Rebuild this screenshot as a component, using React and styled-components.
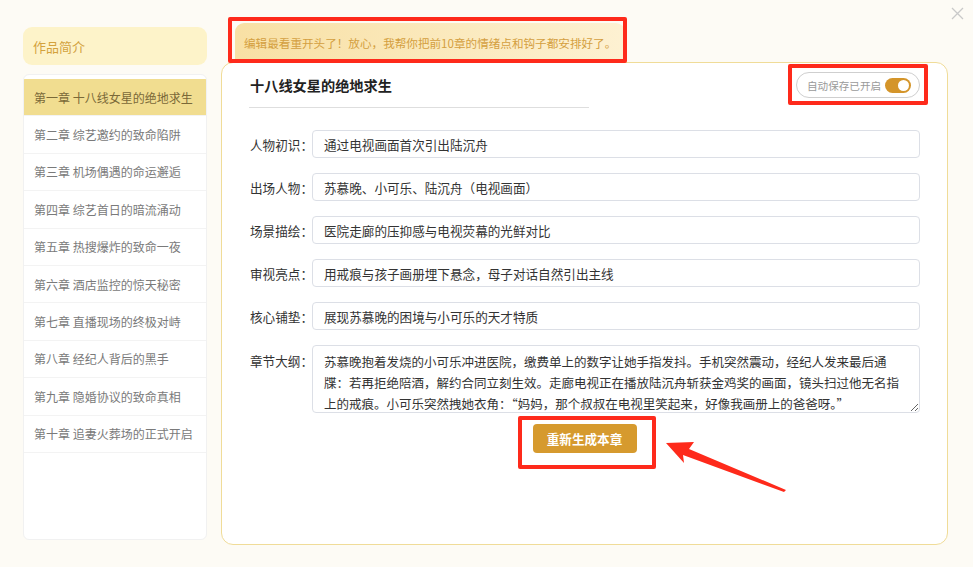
import styled, { createGlobalStyle } from 'styled-components';

const chapters = [
  '第一章 十八线女星的绝地求生',
  '第二章 综艺邀约的致命陷阱',
  '第三章 机场偶遇的命运邂逅',
  '第四章 综艺首日的暗流涌动',
  '第五章 热搜爆炸的致命一夜',
  '第六章 酒店监控的惊天秘密',
  '第七章 直播现场的终极对峙',
  '第八章 经纪人背后的黑手',
  '第九章 隐婚协议的致命真相',
  '第十章 追妻火葬场的正式开启',
];

const fields = [
  { label: '人物初识：', value: '通过电视画面首次引出陆沉舟' },
  { label: '出场人物：', value: '苏慕晚、小可乐、陆沉舟（电视画面）' },
  { label: '场景描绘：', value: '医院走廊的压抑感与电视荧幕的光鲜对比' },
  { label: '审视亮点：', value: '用戒痕与孩子画册埋下悬念，母子对话自然引出主线' },
  { label: '核心铺垫：', value: '展现苏慕晚的困境与小可乐的天才特质' },
];

const outline =
  '苏慕晚抱着发烧的小可乐冲进医院，缴费单上的数字让她手指发抖。手机突然震动，经纪人发来最后通牒：若再拒绝陪酒，解约合同立刻生效。走廊电视正在播放陆沉舟斩获金鸡奖的画面，镜头扫过他无名指上的戒痕。小可乐突然拽她衣角：“妈妈，那个叔叔在电视里笑起来，好像我画册上的爸爸呀。”';

export default function App() {
  return (
    <>
      <GlobalStyle />
      <Page>
        <Sidebar>
          <IntroTab>作品简介</IntroTab>
          <ChapterList>
            {chapters.map((c, i) => (
              <ChapterItem key={c} $active={i === 0}>{c}</ChapterItem>
            ))}
          </ChapterList>
        </Sidebar>

        <Main>
          <Banner>编辑最看重开头了！放心，我帮你把前10章的情绪点和钩子都安排好了。</Banner>
          <Panel>
            <PanelHeader>
              <Title>十八线女星的绝地求生</Title>
              <AutoSave>
                自动保存已开启
                <Switch><Knob /></Switch>
              </AutoSave>
            </PanelHeader>

            <Form>
              {fields.map((f) => (
                <Row key={f.label}>
                  <Label>{f.label}</Label>
                  <Input defaultValue={f.value} />
                </Row>
              ))}
              <Row $top>
                <Label $top>章节大纲：</Label>
                <Outline defaultValue={outline} />
              </Row>
            </Form>

            <ButtonRow>
              <RegenButton>重新生成本章</RegenButton>
            </ButtonRow>
          </Panel>
        </Main>

        <CloseBtn>
          <svg width="13" height="13" viewBox="0 0 13 13">
            <path d="M1 1L12 12M12 1L1 12" stroke="#c9c9c9" strokeWidth="1.3" />
          </svg>
        </CloseBtn>

        <Mark $x={228} $y={17} $w={399} $h={46} />
        <Mark $x={788} $y={64} $w={140} $h={41} />
        <Mark $x={518} $y={416} $w={138} $h={53} />
        <Arrow width="973" height="567" viewBox="0 0 973 567">
          <polygon
            points="666,443 694,442 689,449 786,490 784,492 683,455 684,463"
            fill="#fe2a1b"
          />
        </Arrow>
      </Page>
    </>
  );
}

const GlobalStyle = createGlobalStyle`
  body {
    margin: 0;
    background: #fdfbf5;
    font-family: "Noto Sans CJK SC", "Noto Sans", sans-serif;
  }
  * { box-sizing: border-box; }
`;

const Page = styled.div`
  position: relative;
  width: 973px;
  height: 567px;
  display: flex;
  gap: 14px;
  padding: 23px 25px 0 23px;
  overflow: hidden;
`;

const Sidebar = styled.div`
  width: 184px;
  flex-shrink: 0;
  display: flex;
  flex-direction: column;
  gap: 9px;
  padding-top: 4px;
`;

const IntroTab = styled.div`
  height: 38px;
  display: flex;
  align-items: center;
  padding-left: 10px;
  background: #fdf3c9;
  border-radius: 9px;
  color: #d3a23d;
  font-size: 13px;
`;

const ChapterList = styled.div`
  height: 466px;
  background: #fff;
  border: 1px solid #f1f1f1;
  border-radius: 6px;
  padding-top: 4px;
  overflow: hidden;
`;

const ChapterItem = styled.div`
  height: 37.4px;
  display: flex;
  align-items: center;
  padding-left: 10px;
  font-size: 12px;
  color: ${(p) => (p.$active ? '#7a6938' : '#7a7a7a')};
  background: ${(p) => (p.$active ? '#f1dd90' : 'transparent')};
  border-bottom: 1px solid #f3f3f3;
  white-space: nowrap;
`;

const Main = styled.div`
  flex: 1;
  display: flex;
  flex-direction: column;
`;

const Banner = styled.div`
  margin-left: 14px;
  width: 390px;
  height: 39px;
  display: flex;
  align-items: center;
  padding-left: 9px;
  background: linear-gradient(90deg, #f8e0a4, #fdf1d2);
  border-radius: 9px 9px 0 0;
  color: #d49f40;
  font-size: 11.6px;
  white-space: nowrap;
`;

const Panel = styled.div`
  height: 483px;
  background: #fff;
  border: 1px solid #f0dc98;
  border-radius: 12px;
  padding: 9px 27px 0 27px;
`;

const PanelHeader = styled.div`
  display: flex;
  justify-content: space-between;
  align-items: flex-start;
`;

const Title = styled.div`
  width: 340px;
  padding: 3px 0 12px 1px;
  border-bottom: 1px solid #dedede;
  font-size: 14.2px;
  line-height: 20px;
  font-weight: 700;
  color: #222;
`;

const AutoSave = styled.div`
  width: 124px;
  height: 26px;
  display: flex;
  align-items: center;
  justify-content: space-between;
  padding: 0 8px 0 10px;
  border: 1px solid #cfcfcf;
  border-radius: 13px;
  font-size: 10.6px;
  color: #9a9a9a;
`;

const Switch = styled.div`
  width: 26px;
  height: 15px;
  border-radius: 8px;
  background: #d4952a;
  display: flex;
  align-items: center;
  justify-content: flex-end;
  padding-right: 2px;
`;

const Knob = styled.div`
  width: 11px;
  height: 11px;
  border-radius: 50%;
  background: #fff;
`;

const Form = styled.div`
  margin-top: 22px;
  display: flex;
  flex-direction: column;
  gap: 15px;
`;

const Row = styled.div`
  display: flex;
  align-items: ${(p) => (p.$top ? 'flex-start' : 'center')};
`;

const Label = styled.div`
  width: 63px;
  flex-shrink: 0;
  padding-left: 1px;
  padding-top: ${(p) => (p.$top ? '5px' : '0')};
  font-size: 12.6px;
  line-height: 21px;
  color: #333;
  white-space: nowrap;
`;

const Input = styled.input`
  flex: 1;
  height: 28px;
  border: 1px solid #dcdfe6;
  border-radius: 4px;
  padding: 0 11px;
  font-family: inherit;
  font-size: 12.6px;
  color: #333;
  outline: none;
`;

const Outline = styled.textarea`
  flex: 1;
  height: 68px;
  border: 1px solid #dcdfe6;
  border-radius: 4px;
  padding: 5px 11px;
  font-family: inherit;
  font-size: 12.5px;
  line-height: 21px;
  color: #333;
  outline: none;
  resize: vertical;
  overflow: hidden;
`;

const ButtonRow = styled.div`
  display: flex;
  justify-content: center;
  margin-top: 11px;
`;

const RegenButton = styled.button`
  width: 104px;
  height: 29px;
  border: none;
  border-radius: 4px;
  background: #d69a2e;
  color: #fff;
  font-family: inherit;
  font-size: 12.6px;
  font-weight: 700;
`;

const CloseBtn = styled.div`
  position: absolute;
  top: 7px;
  right: 9px;
  line-height: 0;
`;

const Mark = styled.div`
  position: absolute;
  left: ${(p) => p.$x}px;
  top: ${(p) => p.$y}px;
  width: ${(p) => p.$w}px;
  height: ${(p) => p.$h}px;
  border: 4px solid #fe2a1b;
  border-radius: 2px;
  pointer-events: none;
`;

const Arrow = styled.svg`
  position: absolute;
  left: 0;
  top: 0;
  pointer-events: none;
`;
